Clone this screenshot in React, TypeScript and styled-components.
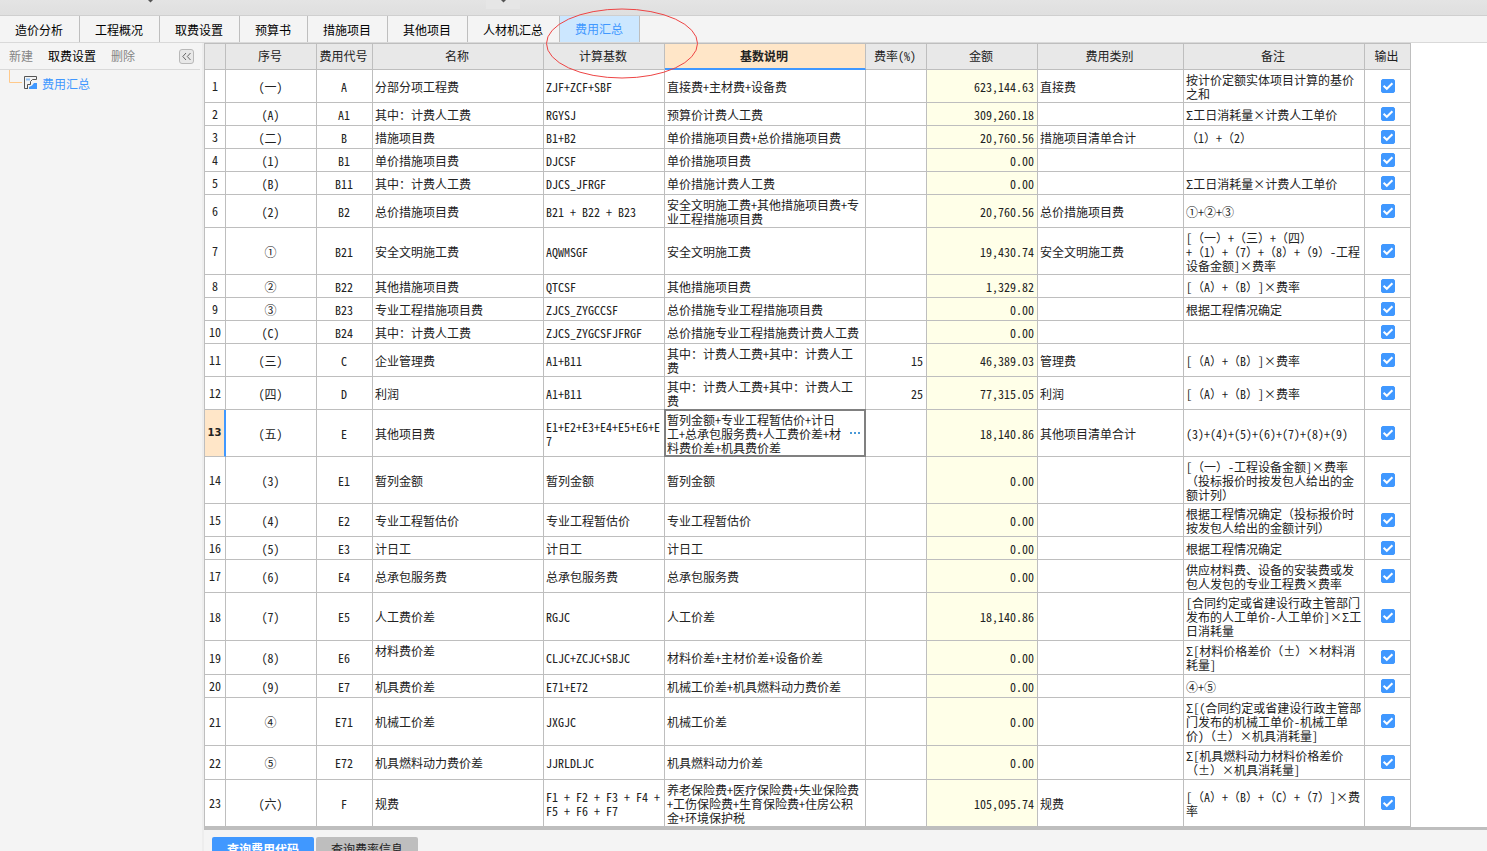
import React, { useState } from "react";
import styled, { createGlobalStyle } from "styled-components";

const ui = `"Noto Sans CJK SC", sans-serif`;
const mono = `"Noto Sans Mono CJK SC", "Noto Sans CJK SC", monospace`;
const line = "#bebebe";
const blue = "#4098ff";
const peach = "#ffe6c8";

const GlobalStyle = createGlobalStyle`
  * { box-sizing: border-box; }
  body { margin: 0; background: #f4f4f4; }
  button, input { font: inherit; margin: 0; padding: 0; }
`;

const Page = styled.div`
  position: relative;
  display: flex;
  flex-direction: column;
  height: 100vh;
  overflow: hidden;
  background: #f4f4f4;
  font: 12px/14px ${ui};
  color: #222;
`;

const TopStrip = styled.header`
  display: flex;
  flex: none;
  height: 16px;
  padding-left: 148px;
  gap: 333px;
  background: linear-gradient(#e4e4e4, #dfdfdf);
  border-bottom: 1px solid #cfcfcf;
`;

const DropHint = styled.span<{ $raised?: boolean }>`
  display: flex;
  justify-content: center;
  width: ${(p) => (p.$raised ? 34 : 5)}px;
  height: 9px;
  background: ${(p) => (p.$raised ? "#e6e6e6" : "transparent")};
`;

const Tabs = styled.nav`
  display: flex;
  flex: none;
  height: 27px;
  border-bottom: 1px solid #d9d9d9;
`;

const Tab = styled.button<{ $active?: boolean }>`
  padding: ${(p) => (p.$active ? "0 16px 0 15px" : "2px 16px 0 15px")};
  border: 0;
  border-right: 1px solid ${line};
  background: ${(p) => (p.$active ? "#cce7ff" : "transparent")};
  color: ${(p) => (p.$active ? blue : "#000")};
  white-space: nowrap;
`;

const Body = styled.div`
  display: flex;
  flex: 1;
  min-height: 0;
`;

const Sidebar = styled.aside`
  flex: none;
  width: 204px;
  padding-right: 2px;
  border-right: 2px solid #ededed;
`;

const SideTools = styled.div`
  display: flex;
  align-items: center;
  gap: 15px;
  height: 27px;
  padding: 0 6px 0 9px;
  border-bottom: 1px solid #d9d9d9;
`;

const SideTool = styled.button`
  border: 0;
  background: none;
  color: #000;
  &:disabled { color: #858585; }
`;

const Collapse = styled.button`
  display: grid;
  place-items: center;
  width: 15px;
  height: 15px;
  margin-left: auto;
  border: 1px solid #b8b8b8;
  border-radius: 3px;
  background: #e8e8e8;
`;

const TreeItem = styled.a`
  display: flex;
  align-items: center;
  gap: 4px;
  height: 28px;
  padding-left: 9px;
  color: ${blue};
  text-decoration: none;
`;

const Main = styled.main`
  display: flex;
  flex-direction: column;
  flex: 1;
  min-width: 0;
`;

const Sheet = styled.div`
  flex: none;
  overflow: hidden;
  background: #fff;
  border-bottom: 3px solid ${line};
`;

const Grid = styled.table`
  width: 1207px;
  table-layout: fixed;
  border-collapse: separate;
  border-spacing: 0;
  border-left: 1px solid ${line};
  border-top: 1px solid ${line};
  font: 12px/14px ${mono};
  text-spacing-trim: space-all;
`;

const HeadCell = styled.th<{ $current?: boolean }>`
  height: 26px;
  padding: 0 2px 1px 0;
  border-right: 1px solid ${line};
  border-bottom: ${(p) => (p.$current ? `2px solid ${blue}` : `1px solid ${line}`)};
  background: ${(p) => (p.$current ? peach : "#e8e8e8")};
  font-weight: ${(p) => (p.$current ? 700 : 400)};
`;

const Row = styled.tr<{ $height: number }>`
  height: ${(p) => p.$height}px;
`;

const RowHead = styled.th<{ $current?: boolean }>`
  padding: 0;
  border-right: ${(p) => (p.$current ? `2px solid ${blue}` : `1px solid ${line}`)};
  border-bottom: 1px solid ${line};
  background: ${(p) => (p.$current ? peach : "#fff")};
  font: ${(p) => (p.$current ? `700 10px/14px "DejaVu Sans", sans-serif` : `400 12px/14px ${mono}`)};
`;

const Cell = styled.td<{ $align?: string; $amount?: boolean }>`
  position: relative;
  padding: 1px 3px 0 2px;
  border-right: 1px solid ${line};
  border-bottom: 1px solid ${line};
  background: ${(p) => (p.$amount ? "#ffffe8" : "#fff")};
  text-align: ${(p) => p.$align ?? "left"};
  white-space: pre;
`;

const CheckCell = styled(Cell)`
  padding: 0 2px 1px;
`;

const Focus = styled.span`
  position: absolute;
  inset: -1px;
  border: 2px solid #808080;
  pointer-events: none;
`;

const More = styled.button`
  position: absolute;
  top: 14px;
  right: 2px;
  display: grid;
  place-items: center;
  width: 16px;
  height: 18px;
  border: 0;
  background: #fff;
`;

const Check = styled.label`
  display: grid;
  place-items: center;
  > * { grid-area: 1 / 1; }
  svg { pointer-events: none; }
`;

const CheckInput = styled.input`
  appearance: none;
  width: 14px;
  height: 14px;
  border: 1px solid ${blue};
  border-radius: 2px;
  background: #fff;
  &:checked { background: ${blue}; }
`;

const Footer = styled.div`
  display: flex;
  flex: none;
  gap: 2px;
  padding: 7px 8px 0;
`;

const FootTab = styled.button<{ $active?: boolean }>`
  width: 102px;
  height: 24px;
  border: 0;
  border-radius: 2px 2px 0 0;
  background: ${(p) => (p.$active ? blue : line)};
  color: ${(p) => (p.$active ? "#fff" : "#222")};
  font-weight: ${(p) => (p.$active ? 700 : 400)};
`;

const Annotation = styled.svg`
  position: absolute;
  left: 546px;
  top: 8px;
  pointer-events: none;
`;

const tabs = ["造价分析", "工程概况", "取费设置", "预算书", "措施项目", "其他项目", "人材机汇总", "费用汇总"];
const widths = [21, 91, 56, 171, 121, 201, 61, 111, 146, 181, 46];
const heads = ["", "序号", "费用代号", "名称", "计算基数", "基数说明", "费率(%)", "金额", "费用类别", "备注", "输出"];

// height, 序号, 费用代号, 名称, 计算基数, 基数说明, 费率, 金额, 费用类别, 备注
type Fee = [number, string, string, string, string, string, string, string, string, string];

const fees: Fee[] = [
  [33, "(一)", "A", "分部分项工程费", "ZJF+ZCF+SBF", "直接费+主材费+设备费", "", "623,144.63", "直接费", "按计价定额实体项目计算的基价\n之和"],
  [23, "(A)", "A1", "其中：计费人工费", "RGYSJ", "预算价计费人工费", "", "309,260.18", "", "Σ工日消耗量×计费人工单价"],
  [23, "(二)", "B", "措施项目费", "B1+B2", "单价措施项目费+总价措施项目费", "", "20,760.56", "措施项目清单合计", "（1）+（2）"],
  [23, "(1)", "B1", "单价措施项目费", "DJCSF", "单价措施项目费", "", "0.00", "", ""],
  [23, "(B)", "B11", "其中：计费人工费", "DJCS_JFRGF", "单价措施计费人工费", "", "0.00", "", "Σ工日消耗量×计费人工单价"],
  [33, "(2)", "B2", "总价措施项目费", "B21 + B22 + B23", "安全文明施工费+其他措施项目费+专\n业工程措施项目费", "", "20,760.56", "总价措施项目费", "①+②+③"],
  [47, "①", "B21", "安全文明施工费", "AQWMSGF", "安全文明施工费", "", "19,430.74", "安全文明施工费", "[（一）+（三）+（四）\n+（1）+（7）+（8）+（9）-工程\n设备金额]×费率"],
  [23, "②", "B22", "其他措施项目费", "QTCSF", "其他措施项目费", "", "1,329.82", "", "[（A）+（B）]×费率"],
  [23, "③", "B23", "专业工程措施项目费", "ZJCS_ZYGCCSF", "总价措施专业工程措施项目费", "", "0.00", "", "根据工程情况确定"],
  [23, "(C)", "B24", "其中：计费人工费", "ZJCS_ZYGCSFJFRGF", "总价措施专业工程措施费计费人工费", "", "0.00", "", ""],
  [33, "(三)", "C", "企业管理费", "A1+B11", "其中：计费人工费+其中：计费人工\n费", "15", "46,389.03", "管理费", "[（A）+（B）]×费率"],
  [33, "(四)", "D", "利润", "A1+B11", "其中：计费人工费+其中：计费人工\n费", "25", "77,315.05", "利润", "[（A）+（B）]×费率"],
  [47, "(五)", "E", "其他项目费", "E1+E2+E3+E4+E5+E6+E\n7", "暂列金额+专业工程暂估价+计日\n工+总承包服务费+人工费价差+材\n料费价差+机具费价差", "", "18,140.86", "其他项目清单合计", "(3)+(4)+(5)+(6)+(7)+(8)+(9)"],
  [47, "(3)", "E1", "暂列金额", "暂列金额", "暂列金额", "", "0.00", "", "[（一）-工程设备金额]×费率\n（投标报价时按发包人给出的金\n额计列）"],
  [33, "(4)", "E2", "专业工程暂估价", "专业工程暂估价", "专业工程暂估价", "", "0.00", "", "根据工程情况确定（投标报价时\n按发包人给出的金额计列）"],
  [23, "(5)", "E3", "计日工", "计日工", "计日工", "", "0.00", "", "根据工程情况确定"],
  [33, "(6)", "E4", "总承包服务费", "总承包服务费", "总承包服务费", "", "0.00", "", "供应材料费、设备的安装费或发\n包人发包的专业工程费×费率"],
  [48, "(7)", "E5", "人工费价差", "RGJC", "人工价差", "", "18,140.86", "", "[合同约定或省建设行政主管部门\n发布的人工单价-人工单价]×Σ工\n日消耗量"],
  [34, "(8)", "E6", "材料费价差\n ", "CLJC+ZCJC+SBJC", "材料价差+主材价差+设备价差", "", "0.00", "", "Σ[材料价格差价（±）×材料消\n耗量]"],
  [23, "(9)", "E7", "机具费价差", "E71+E72", "机械工价差+机具燃料动力费价差", "", "0.00", "", "④+⑤"],
  [48, "④", "E71", "机械工价差", "JXGJC", "机械工价差", "", "0.00", "", "Σ[(合同约定或省建设行政主管部\n门发布的机械工单价-机械工单\n价)（±）×机具消耗量]"],
  [34, "⑤", "E72", "机具燃料动力费价差", "JJRLDLJC", "机具燃料动力价差", "", "0.00", "", "Σ[机具燃料动力材料价格差价\n（±）×机具消耗量]"],
  [47, "(六)", "F", "规费", "F1 + F2 + F3 + F4 +\nF5 + F6 + F7", "养老保险费+医疗保险费+失业保险费\n+工伤保险费+生育保险费+住房公积\n金+环境保护税", "", "105,095.74", "规费", "[（A）+（B）+（C）+（7）]×费\n率"],
];

const currentRow = 12;

function OutputCheck({ name }: { name: string }) {
  const [on, setOn] = useState(true);
  return (
    <Check>
      <CheckInput type="checkbox" aria-label={`输出 ${name}`} checked={on} onChange={() => setOn(!on)} />
      {on && (
        <svg width="14" height="14" viewBox="0 0 14 14" fill="none" stroke="#fff" strokeWidth="2">
          <path d="M2.6 6.8 5.8 9.8 11.4 4.2" />
        </svg>
      )}
    </Check>
  );
}

function FeeRow({ fee, index }: { fee: Fee; index: number }) {
  const [height, no, code, name, base, desc, rate, amount, kind, note] = fee;
  const current = index === currentRow;
  return (
    <Row $height={height}>
      <RowHead scope="row" $current={current}>{index + 1}</RowHead>
      <Cell $align="center">{no}</Cell>
      <Cell $align="center">{code}</Cell>
      <Cell>{name}</Cell>
      <Cell>{base}</Cell>
      <Cell>
        {desc}
        {current && (
          <>
            <Focus />
            <More aria-label="编辑基数说明">
              <svg width="11" height="2" fill="#4a9ad8">
                <rect x="0" width="2" height="2" />
                <rect x="4" width="2" height="2" />
                <rect x="8" width="2" height="2" />
              </svg>
            </More>
          </>
        )}
      </Cell>
      <Cell $align="right">{rate}</Cell>
      <Cell $align="right" $amount>{amount}</Cell>
      <Cell>{kind}</Cell>
      <Cell>{note}</Cell>
      <CheckCell><OutputCheck name={name.trim()} /></CheckCell>
    </Row>
  );
}

export default function App() {
  return (
    <Page>
      <GlobalStyle />
      <TopStrip>
        <DropHint><svg width="5" height="3" fill="#555"><path d="M0 0h5L2.5 2.5z" /></svg></DropHint>
        <DropHint $raised><svg width="5" height="3" fill="#555"><path d="M0 0h5L2.5 2.5z" /></svg></DropHint>
      </TopStrip>
      <Tabs>
        {tabs.map((t) => (
          <Tab key={t} $active={t === "费用汇总"}>{t}</Tab>
        ))}
      </Tabs>
      <Body>
        <Sidebar>
          <SideTools>
            <SideTool disabled>新建</SideTool>
            <SideTool>取费设置</SideTool>
            <SideTool disabled>删除</SideTool>
            <Collapse aria-label="收起">
              <svg width="9" height="7" fill="none" stroke="#666">
                <path d="M4 0 .8 3.5 4 7M8.500 0 5.300 3.500 8.500 7" />
              </svg>
            </Collapse>
          </SideTools>
          <TreeItem href="#">
            <svg width="29" height="28" fill="none">
              <path d="M.5 0V12.500H13" stroke="#ffc98a" />
              <path d="M19 18.500H15.500V6.500H27.500V9.500H23.500L21.500 11.500V14.500H18.500V18.500" stroke="#555" />
              <path d="M17 9.500H21" stroke="#8fc0f5" strokeWidth="2" />
              <path d="M20 19V17L23 15.500 25 13H28V19Z" fill={blue} />
            </svg>
            费用汇总
          </TreeItem>
        </Sidebar>
        <Main>
          <Sheet>
            <Grid>
              <colgroup>
                {widths.map((w, i) => <col key={i} width={w} />)}
              </colgroup>
              <thead>
                <tr>
                  {heads.map((h) => (
                    <HeadCell key={h} scope="col" $current={h === "基数说明"}>{h}</HeadCell>
                  ))}
                </tr>
              </thead>
              <tbody>
                {fees.map((f, i) => <FeeRow key={f[2]} fee={f} index={i} />)}
              </tbody>
            </Grid>
          </Sheet>
          <Footer>
            <FootTab $active>查询费用代码</FootTab>
            <FootTab>查询费率信息</FootTab>
          </Footer>
        </Main>
      </Body>
      <Annotation width="153" height="71" fill="none" stroke="#ee4444">
        <ellipse cx="76" cy="35.500" rx="75.500" ry="34.500" />
      </Annotation>
    </Page>
  );
}
